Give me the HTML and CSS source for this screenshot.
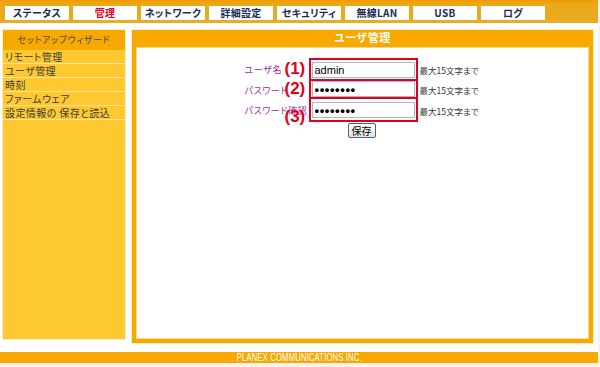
FILE: index.html
```html
<!DOCTYPE html>
<html lang="ja">
<head>
    <meta charset="UTF-8">
    <title>ユーザ管理</title>
    <link rel="stylesheet" href="styles.css">
</head>
<body>
    <div class="page">
        <div class="topnav">
            <a class="tab">ステータス</a>
            <a class="tab active">管理</a>
            <a class="tab">ネットワーク</a>
            <a class="tab">詳細設定</a>
            <a class="tab">セキュリティ</a>
            <a class="tab">無線LAN</a>
            <a class="tab">USB</a>
            <a class="tab">ログ</a>
        </div>
        <div class="main">
            <div class="sidebar">
                <div class="side-title">セットアップウィザード</div>
                <ul class="side-menu">
                    <li>リモート管理</li>
                    <li>ユーザ管理</li>
                    <li>時刻</li>
                    <li>ファームウェア</li>
                    <li>設定情報の 保存と読込</li>
                </ul>
            </div>
            <div class="panel">
                <div class="panel-title">ユーザ管理</div>
                <div class="panel-body">
                    <div class="form">
                        <div class="label">ユーザ名</div>
                        <div class="field first"><input type="text" value="admin"></div>
                        <div class="hint">最大15文字まで</div>

                        <div class="label">パスワード</div>
                        <div class="field second"><input class="pass" type="password" value="12345678"></div>
                        <div class="hint">最大15文字まで</div>

                        <div class="label">パスワード確認</div>
                        <div class="field third"><input class="pass" type="password" value="12345678"></div>
                        <div class="hint">最大15文字まで</div>

                        <span class="num n1">(1)</span>
                        <span class="num n2">(2)</span>
                        <span class="num n3">(3)</span>
                    </div>
                    <button class="save">保存</button>
                </div>
            </div>
        </div>
        <div class="footer"><span>PLANEX COMMUNICATIONS INC.</span></div>
    </div>
</body>
</html>
```

FILE: styles.css
```css
body {
    margin: 0;
    background: #f3f3f3;
    font-family: "Noto Sans CJK JP", sans-serif;
    font-feature-settings: "palt";
}
.page {
    width: 598px;
    height: 363px;
    background: #fff;
}
.topnav {
    height: 23px;
    box-sizing: border-box;
    padding: 6px 0 0 5px;
    display: flex;
    gap: 4px;
    background: linear-gradient(#f39a00 0, #eba818 4px, #e8ac26 100%);
}
.tab {
    width: 64px;
    height: 14px;
    background: #fff;
    color: #1c2a58;
    font-size: 10px;
    font-weight: bold;
    line-height: 14px;
    text-align: center;
    letter-spacing: 0.3px;
}
.tab.active {
    color: #e8001c;
}
.main {
    display: flex;
    gap: 5px;
    padding: 6px 0 0 2px;
}
.sidebar {
    width: 122px;
    height: 309px;
    border: 1px solid #fff0c4;
    background: #fdc830;
}
.side-title {
    height: 20px;
    line-height: 20px;
    background: #f7a900;
    color: #4a4a4a;
    font-size: 9px;
    text-align: center;
    letter-spacing: 0.6px;
}
.side-menu {
    list-style: none;
    margin: 0;
    padding: 0;
}
.side-menu li {
    height: 13px;
    line-height: 13px;
    border-bottom: 1px solid #fde59a;
    padding-left: 2px;
    font-size: 10px;
    color: #3c3c3c;
    letter-spacing: 0.4px;
}
.panel {
    width: 461px;
    height: 313px;
    border: 1px solid #fdf0d2;
    background: #f7a900;
    display: flex;
    flex-direction: column;
}
.panel-title {
    height: 17px;
    line-height: 15px;
    color: #fff;
    font-size: 11px;
    font-weight: bold;
    text-align: center;
    letter-spacing: 0.5px;
}
.panel-body {
    flex: 1;
    margin: 0 4px 4px;
    background: #fff;
    border: 1px solid #fcd98c;
    display: flex;
    flex-direction: column;
    align-items: center;
}
.form {
    position: relative;
    margin-top: 10px;
    margin-left: -3px;
    display: grid;
    grid-template-columns: 64px 109px 60px;
    align-items: center;
}
.label {
    color: #9b2fa0;
    font-size: 9px;
    letter-spacing: 0.6px;
    white-space: nowrap;
}
.field {
    border: 2px solid #e3001b;
    box-sizing: border-box;
}
.field.first {
    padding: 2px 1px 1px;
}
.field.second {
    border-top: 0;
    padding: 0 1px;
}
.field.third {
    border-top: 0;
    padding: 3px 1px 2px;
}
.field input {
    display: block;
    width: 103px;
    height: 16px;
    box-sizing: border-box;
    margin: 0;
    padding: 0 2px;
    border: 1px solid #a7b8cc;
    font-family: "Liberation Sans", sans-serif;
    font-size: 11px;
    color: #000;
    outline: none;
}
.field input.pass {
    font-size: 13px;
    letter-spacing: 0.6px;
    font-weight: bold;
}
.hint {
    padding-left: 2px;
    font-size: 8.5px;
    color: #333;
    white-space: nowrap;
}
.num {
    position: absolute;
    left: 40px;
    color: #e3001b;
    font-family: "Liberation Sans", sans-serif;
    font-size: 17px;
    font-weight: bold;
    line-height: 17px;
}
.n1 { top: 2px; }
.n2 { top: 22px; }
.n3 { top: 50px; }
.save {
    margin-top: 1px;
    margin-left: -2px;
    height: 15px;
    padding: 0 3px;
    border: 1px solid #4c6180;
    border-radius: 2px;
    background: linear-gradient(#ffffff, #e6e6de);
    font-family: "Noto Sans CJK JP", sans-serif;
    font-size: 10px;
    line-height: 12px;
    color: #000;
}
.footer {
    margin-top: 8px;
    height: 11px;
    background: #f7a900;
    text-align: center;
    overflow: hidden;
}
.footer span {
    display: inline-block;
    vertical-align: top;
    color: #fff;
    font-family: "Liberation Sans", sans-serif;
    font-size: 11px;
    line-height: 11px;
    letter-spacing: 0.2px;
    transform: scaleX(0.7);
}
```
